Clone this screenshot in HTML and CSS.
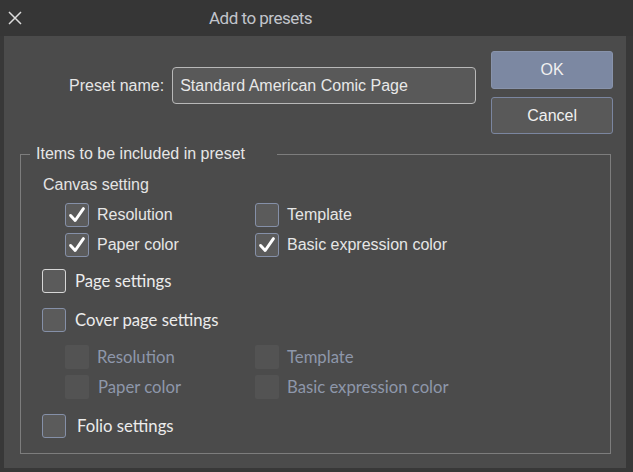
FILE: index.html
```html
<!DOCTYPE html>
<html>
<head>
<meta charset="utf-8">
<link rel="stylesheet" href="styles.css">
</head>
<body>
<div class="window">
  <header class="titlebar">
    <svg class="close" width="14" height="14" viewBox="0 0 14 14"><path d="M1 1 L13 13 M13 1 L1 13" stroke="#dcdcdc" stroke-width="1.5" fill="none"/></svg>
    <h1 class="title">Add to presets</h1>
  </header>
  <main class="panel">
    <div class="top">
      <div class="name-row">
        <span class="name-label">Preset name:</span>
        <div class="input">Standard American Comic Page</div>
      </div>
      <div class="buttons">
        <button class="btn btn-ok">OK</button>
        <button class="btn btn-cancel">Cancel</button>
      </div>
    </div>
    <fieldset class="group">
      <legend>Items to be included in preset</legend>
      <div class="section-title">Canvas setting</div>
      <div class="grid">
        <div class="item"><span class="box checked"><svg viewBox="0 0 24 24"><path d="M5 12.5 L10 18 L19 5"/></svg></span><span class="lbl">Resolution</span></div>
        <div class="item"><span class="box"></span><span class="lbl">Template</span></div>
        <div class="item"><span class="box checked"><svg viewBox="0 0 24 24"><path d="M5 12.5 L10 18 L19 5"/></svg></span><span class="lbl">Paper color</span></div>
        <div class="item"><span class="box checked"><svg viewBox="0 0 24 24"><path d="M5 12.5 L10 18 L19 5"/></svg></span><span class="lbl">Basic expression color</span></div>
      </div>
      <div class="row row-page"><span class="box focus"></span><span class="lbl2">Page settings</span></div>
      <div class="row row-cover"><span class="box"></span><span class="lbl2">Cover page settings</span></div>
      <div class="grid grid-disabled">
        <div class="item"><span class="box disabled"></span><span class="lbl2 dim">Resolution</span></div>
        <div class="item"><span class="box disabled"></span><span class="lbl2 dim">Template</span></div>
        <div class="item"><span class="box disabled"></span><span class="lbl2 dim pc">Paper color</span></div>
        <div class="item"><span class="box disabled"></span><span class="lbl2 dim">Basic expression color</span></div>
      </div>
      <div class="row row-folio"><span class="box"></span><span class="lbl2">Folio settings</span></div>
    </fieldset>
  </main>
</div>
</body>
</html>
```

FILE: styles.css
```css
* { box-sizing: border-box; }
html, body { margin: 0; padding: 0; }
body {
  background: #383838;
  width: 633px;
  height: 472px;
  overflow: hidden;
  font-family: "Liberation Sans", Arial, sans-serif;
  color: #e4e4e4;
}
.window { width: 633px; height: 472px; }
.titlebar {
  height: 36px;
  display: flex;
  align-items: center;
  background: #363636;
}
.close { margin-left: 8px; flex: none; }
.title {
  margin: 0 0 0 187px;
  font-family: Roboto, sans-serif;
  font-weight: 400;
  font-size: 17px;
  letter-spacing: -0.5px;
  color: #c2c5cc;
}
.panel {
  margin: 0 7px 0 4px;
  height: 432px;
  background: #4b4b4b;
  padding-top: 15px;
}
.top { display: flex; }
.name-row {
  display: flex;
  align-items: center;
  gap: 8px;
  margin-left: 65px;
  margin-top: 16px;
  height: 37px;
}
.name-label { font-size: 16px; color: #e6e6e6; }
.input {
  width: 304px;
  height: 37px;
  border: 1px solid #b8b8b8;
  border-radius: 4px;
  background: #595959;
  padding-left: 7px;
  display: flex;
  align-items: center;
  font-size: 16px;
  color: #e8e8e8;
}
.buttons {
  margin-left: 15px;
  display: flex;
  flex-direction: column;
  gap: 8px;
}
.btn {
  width: 122px;
  border-radius: 3px;
  font-family: "Liberation Sans", Arial, sans-serif;
  font-size: 16px;
  color: #f0f0f0;
  padding: 0;
}
.btn-ok { height: 38px; background: #7c88a2; border: 1px solid #8893ab; }
.btn-cancel { height: 37px; background: #595959; border: 1px solid #7b86a0; }
.group {
  margin: 10px 0 0 16px;
  width: 591px;
  height: 310px;
  padding: 0;
  border: 1px solid #7d7d7d;
}
.group legend {
  margin-left: 9px;
  padding: 0 32px 0 6px;
  font-size: 16px;
  line-height: 20px;
  color: #e6e6e6;
}
.section-title {
  margin-top: 9px;
  padding-left: 22px;
  height: 24px;
  line-height: 24px;
  font-size: 16px;
}
.grid {
  display: grid;
  grid-template-columns: 190px auto;
  grid-auto-rows: 30px;
  margin: 3px 0 0 44px;
}
.grid-disabled { margin-top: 7px; }
.item { display: flex; align-items: center; gap: 8px; }
.box {
  width: 24px;
  height: 24px;
  border: 1px solid #8590a8;
  border-radius: 3px;
  background: #5b5b5b;
  flex: none;
  display: flex;
}
.box svg { width: 22px; height: 22px; }
.box svg path { fill: none; stroke: #ffffff; stroke-width: 3.2; stroke-linecap: round; stroke-linejoin: round; }
.box.focus { border-color: #d6d6d6; }
.box.disabled {
  border: none;
  background: #535353;
  border-radius: 2px;
}
.lbl { font-size: 16px; color: #e6e6e6; }
.lbl2 {
  font-family: Lato, "Noto Sans", sans-serif;
  font-size: 16.7px;
  color: #ececec;
}
.lbl2.dim { color: #8e97aa; }
.lbl2.pc { margin-left: 1px; }
.row {
  display: flex;
  align-items: center;
  height: 30px;
  margin-left: 21px;
  gap: 9px;
}
.row-page { margin-top: 6px; }
.row-cover { margin-top: 9px; }
.row-folio { margin-top: 9px; gap: 11px; }
```
